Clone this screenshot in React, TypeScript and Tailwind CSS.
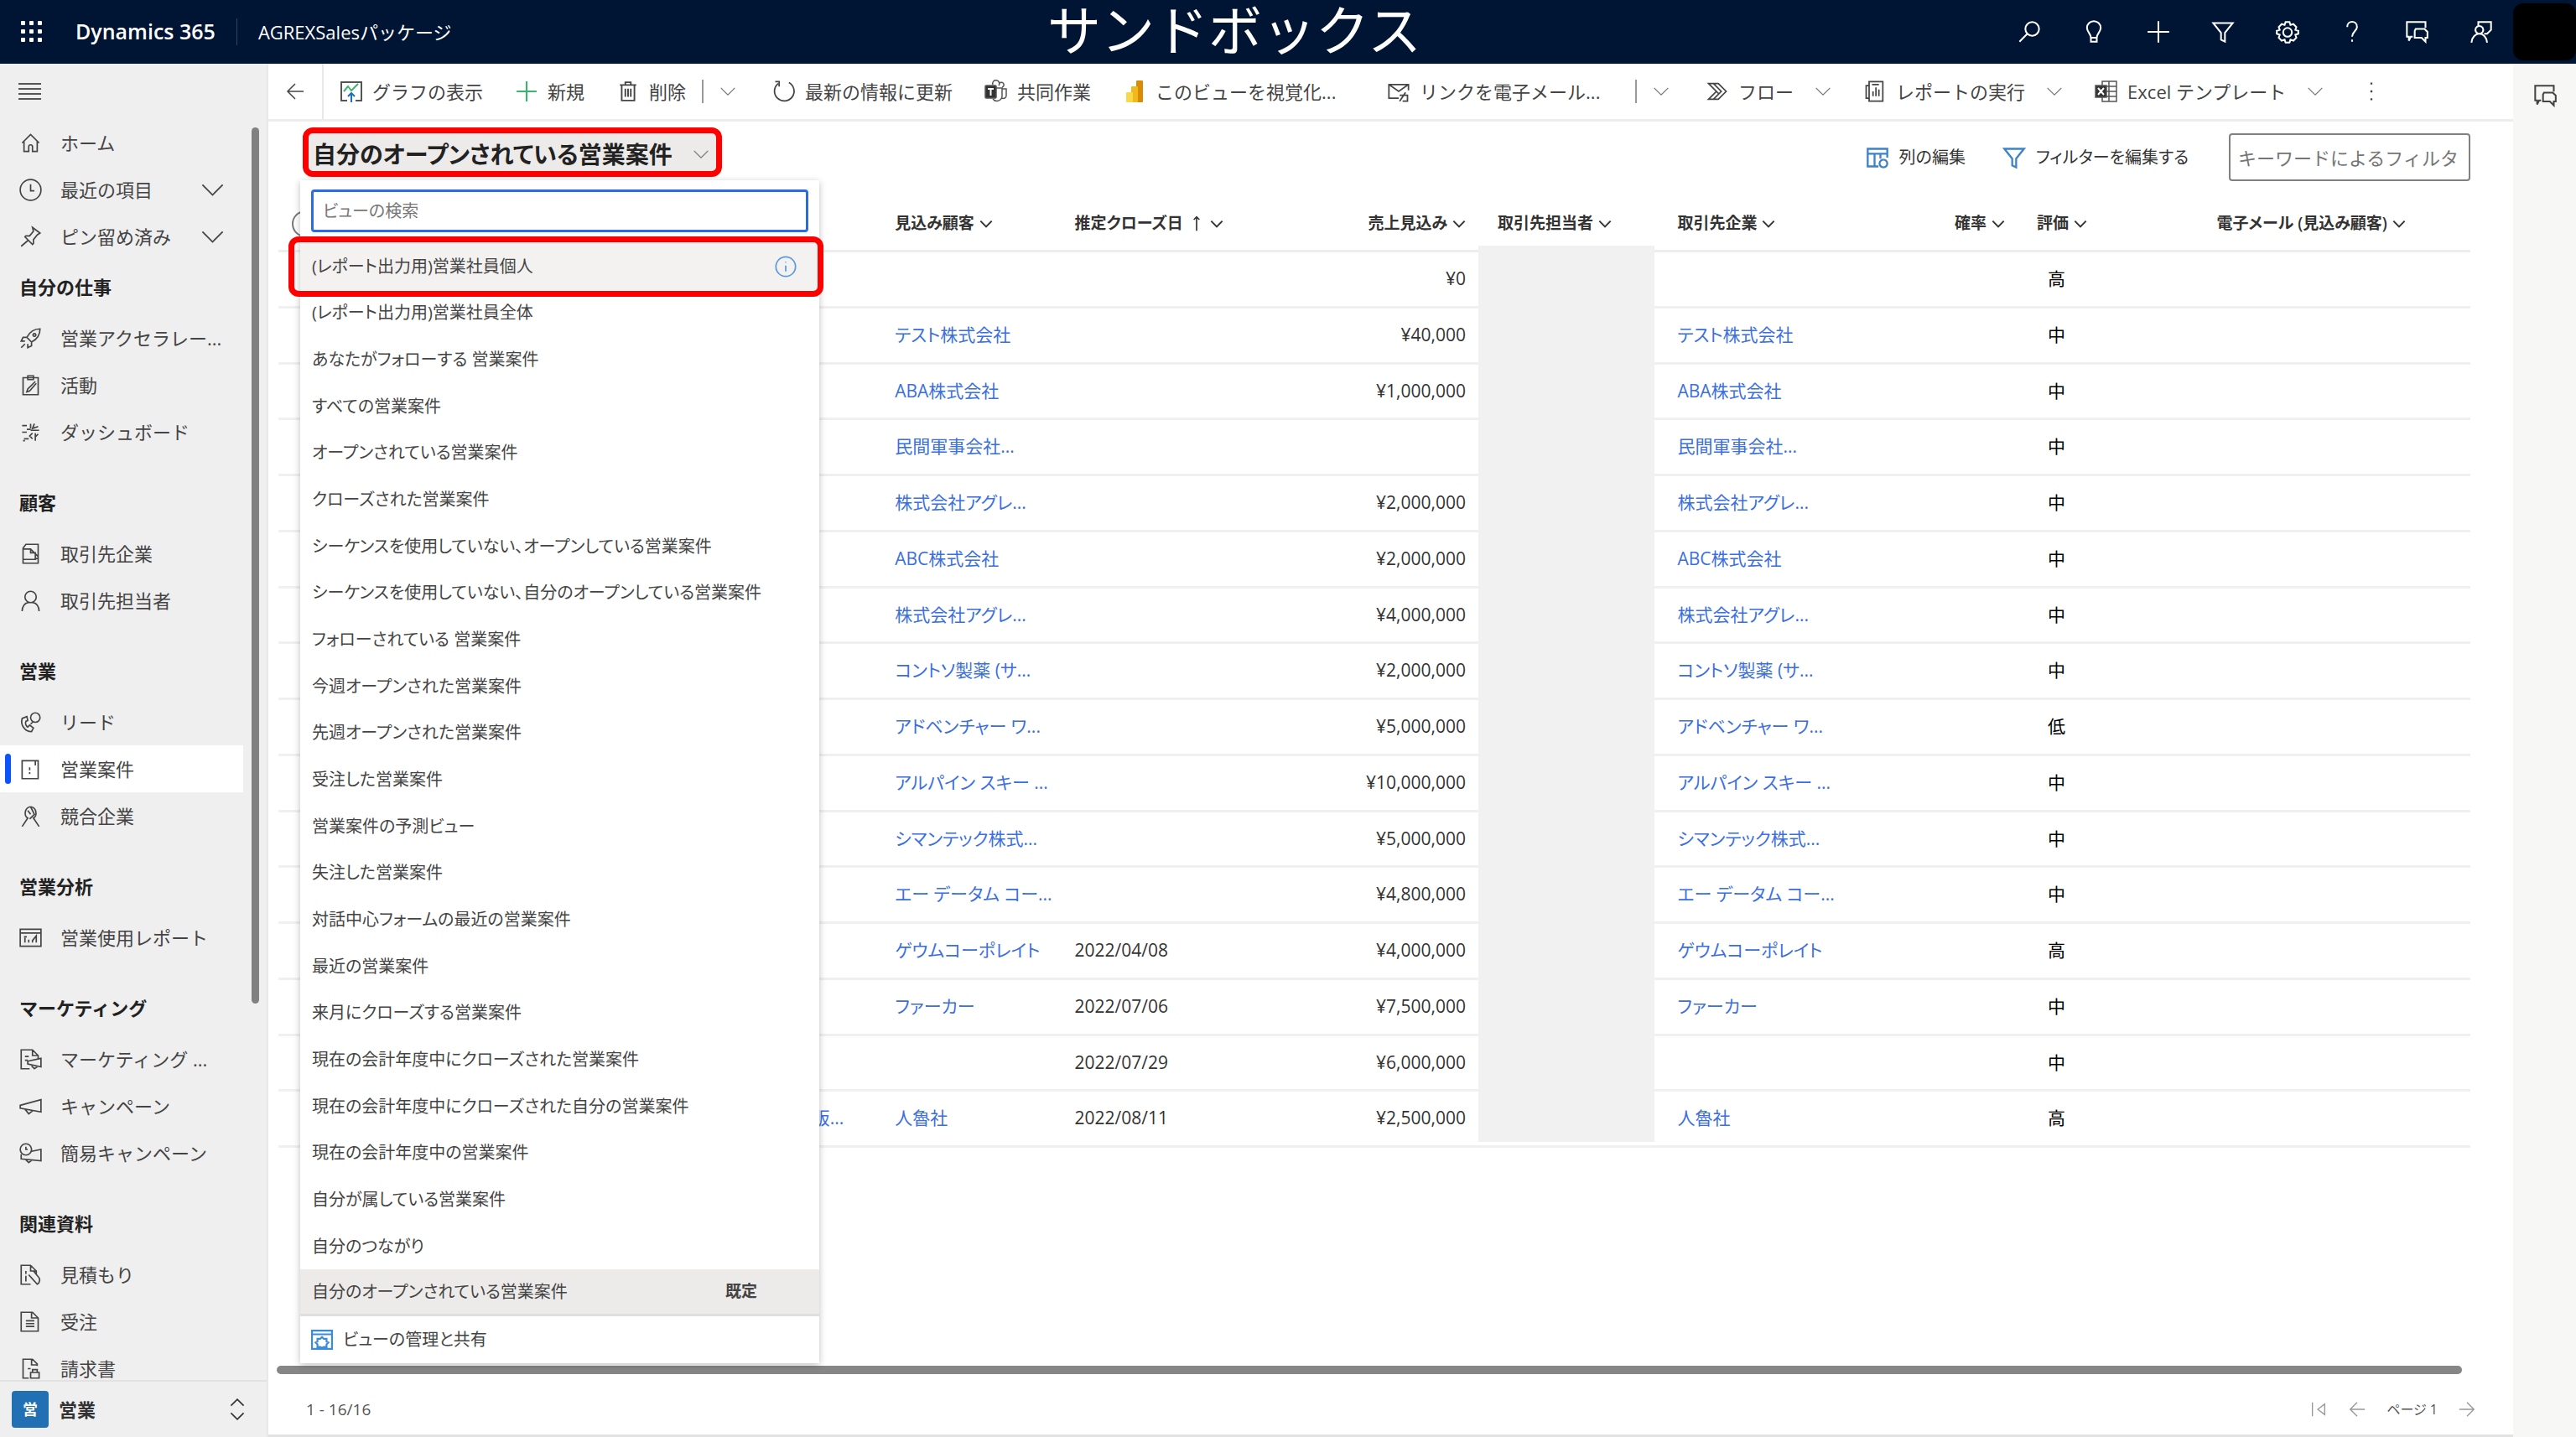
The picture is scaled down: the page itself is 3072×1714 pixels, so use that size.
import { ReactNode } from 'react';

// stroke drawings on a 24 x 24 grid
const icons: Record<string, string> = {
  home: 'M3 12l9-9 9 9M5 10v11h5v-5a2 2 0 0 1 4 0v5h5V10',
  clock: 'M12 1a11 11 0 1 0 0 22 11 11 0 1 0 0-22M12 6v7h4',
  pin: 'M14 2l8 6-3 2-4 5 0 4-1 1-8-8 1-1h4l4-5zM9 16l-7 6',
  rocket: 'M22 2c-6 0-11 3-14 9l5 5c6-3 9-8 9-14zM8 11l-4 0-2 4 4 0M13 16v4l-4 2v-4M16 7a1.5 1.5 0 1 0 .1 0M6 18l-4 4',
  activity: 'M4 4h16v18H4zM9 2h6v4H9zM17 8l-8 8-1 3 3-1 7-8',
  dashboard: 'M3 5h5M3 12h5M5 19h5M12 3v5M12 10h9M16 3l-2 5 6-2M14 13l-3 3 3 3M17 13v8M20 14l-3 3M8 9l4 0M4 21h2',
  account: 'M4 22V6l3-4h13v20zM4 7h8l8 8M12 7v4h5v6h3M4 18h14',
  person: 'M12 2a6 6 0 1 0 0 12 6 6 0 1 0 0-12M3 23c0-5 3-9 7-9M21 23c0-5-3-9-7-9',
  lead: 'M17 2a5 5 0 1 0 0 10 5 5 0 1 0 0-10M3 8c-2 7 3 14 10 14l2-4-4-3-2 2c-2-1-3-4-2-6l2-1-1-4zM14 12l-2 2',
  opportunity: 'M3 3h17v19H3zM17 3v5M11 10v3M11 15v2',
  competitor: 'M12 2c-7 1-7 10-3 12L3 23M12 2c7 1 7 10 3 12l6 9M12 2l4 8-5 5M9 6l3 4',
  report: 'M1 3h22v18H1zM1 7h22M6 17v-5M10 17v-3M14 17v-2l4-5v7M5 11h3',
  marketing: 'M20 11V8l-6-6H2v20h9M14 2v6h6M6 9h4M6 13h3M9 14l14-3v9L9 17zM13 19l3 3 3-2',
  campaign: 'M1 11l22-6v13L1 14zM6 15l4 5 4-3',
  quick: 'M7 2a6 6 0 1 0 0 12 6 6 0 1 0 0-12M2 13v5l21 2V8l-10 2M7 5v3h2M7 19l3 3 4-3',
  quote: 'M12 22H2V2h10l6 6v4M12 2v6h6M7 8v3M7 13v6M10 12l9 10a5 5 0 0 0 1-8l-5-6',
  order: 'M2 2h12l6 6v14H2zM13 2v6h7M7 11h9M7 14h9M7 17h9',
  invoice: 'M19 9V7l-5-5H4v20h6M13 2v6h6M9 12h3M12 16h9v6h-9zM14 16v-3h5v3',
  search: 'M15 2a7 7 0 1 0 0 14 7 7 0 1 0 0-14M10 14L2 22',
  bulb: 'M12 1a7 7 0 0 0-7 7c0 4 4 6 4 10v4h6v-4c0-4 4-6 4-10a7 7 0 0 0-7-7M9 18h6',
  plus: 'M12 1v22M1 12h22',
  filter: 'M2 3h20l-8 10v9l-4-2v-7z',
  gear: 'M10 2h4l1 3 3-1 3 3-1 3 3 1v3l-3 1 1 3-3 3-3-1-1 3h-4l-1-3-3 1-3-3 1-3-3-1v-3l3-1-1-3 3-3 3 1zM12 8a4 4 0 1 0 0 9 4 4 0 1 0 0-9',
  help: 'M7 7c0-7 10-7 10 0 0 4-5 5-5 10M12 20v2',
  chat: 'M8 17H6l-2 4v-4H2V2h19v6M11 9h9l3 3v6h-2v4l-4-4h-7v-7z',
  feedback: 'M9 6V2h13v8l-4 4h-3M10 6a4 4 0 1 0 .1 0M2 23c1-12 15-12 16 0',
  back: 'M22 12H3M12 3l-9 9 9 9',
  forward: 'M2 12h19M12 3l9 9-9 9',
  first: 'M4 3v18M20 5v14l-9-7z',
  down: 'M2 7l10 10L22 7',
  trash: 'M3 5h18M9 5V2h6v3M5 5v17h14V5M9 9v9M12 9v9M15 9v9',
  refresh: 'M6 4a10 10 0 1 0 11-1M3 2h4v5',
  mail: 'M12 19H2V5h20v6M2 5l10 7 10-7M13 16h8v6h-5M13 22l6-9',
  flow: 'M3 4h10l8 8-8 8H3l8-8zM8 4l8 8-8 8M8 9l6 6',
  runreport: 'M6 2h14v20H6zM6 6H3v13h3M10 17v-5M13 17V8M16 17v-7M9 5h7',
  columns: 'M13 21H2V3h20v9M2 8h20M9 8v13M15 8v5M18 14a4 4 0 1 0 .1 0',
  manage: 'M1 2h22v20H1zM1 6h22M12 9l2 2h3v3l2 1-2 2v3h-3l-2 1-2-1H7v-3l-2-2 2-1v-3h3z',
  info: 'M12 2a10 10 0 1 0 0 20 10 10 0 1 0 0-20M12 11v6M12 7v1',
  more: 'M12 3v2M12 11v2M12 19v2',
  updown: 'M5 8l7-7 7 7M5 16l7 7 7-7',
  sortUp: 'M12 22V2M8 6l4-4 4 4',
};

function Icon({ name, className = 'size-7', weight = 1.5 }: { name: string; className?: string; weight?: number }) {
  return (
    <svg viewBox="0 0 24 24" fill="none" stroke="currentColor" strokeWidth={weight} className={`shrink-0 ${className}`} aria-hidden="true">
      <path d={icons[name]} />
    </svg>
  );
}

const navGroups = [
  {
    title: '',
    items: [
      { icon: 'home', label: 'ホーム' },
      { icon: 'clock', label: '最近の項目', expand: true },
      { icon: 'pin', label: 'ピン留め済み', expand: true },
    ],
  },
  {
    title: '自分の仕事',
    items: [
      { icon: 'rocket', label: '営業アクセラレー...' },
      { icon: 'activity', label: '活動' },
      { icon: 'dashboard', label: 'ダッシュボード' },
    ],
  },
  {
    title: '顧客',
    items: [
      { icon: 'account', label: '取引先企業' },
      { icon: 'person', label: '取引先担当者' },
    ],
  },
  {
    title: '営業',
    items: [
      { icon: 'lead', label: 'リード' },
      { icon: 'opportunity', label: '営業案件', active: true },
      { icon: 'competitor', label: '競合企業' },
    ],
  },
  { title: '営業分析', items: [{ icon: 'report', label: '営業使用レポート' }] },
  {
    title: 'マーケティング',
    items: [
      { icon: 'marketing', label: 'マーケティング ...' },
      { icon: 'campaign', label: 'キャンペーン' },
      { icon: 'quick', label: '簡易キャンペーン' },
    ],
  },
  {
    title: '関連資料',
    items: [
      { icon: 'quote', label: '見積もり' },
      { icon: 'order', label: '受注' },
      { icon: 'invoice', label: '請求書' },
    ],
  },
] as { title: string; items: { icon: string; label: string; expand?: boolean; active?: boolean }[] }[];

const views = [
  '(レポート出力用)営業社員個人',
  '(レポート出力用)営業社員全体',
  'あなたがフォローする 営業案件',
  'すべての営業案件',
  'オープンされている営業案件',
  'クローズされた営業案件',
  'シーケンスを使用していない、オープンしている営業案件',
  'シーケンスを使用していない、自分のオープンしている営業案件',
  'フォローされている 営業案件',
  '今週オープンされた営業案件',
  '先週オープンされた営業案件',
  '受注した営業案件',
  '営業案件の予測ビュー',
  '失注した営業案件',
  '対話中心フォームの最近の営業案件',
  '最近の営業案件',
  '来月にクローズする営業案件',
  '現在の会計年度中にクローズされた営業案件',
  '現在の会計年度中にクローズされた自分の営業案件',
  '現在の会計年度中の営業案件',
  '自分が属している営業案件',
  '自分のつながり',
  '自分のオープンされている営業案件',
];

// company, close date, revenue, rating
const rows = [
  ['', '', '¥0', '高'],
  ['テスト株式会社', '', '¥40,000', '中'],
  ['ABA株式会社', '', '¥1,000,000', '中'],
  ['民間軍事会社...', '', '', '中'],
  ['株式会社アグレ...', '', '¥2,000,000', '中'],
  ['ABC株式会社', '', '¥2,000,000', '中'],
  ['株式会社アグレ...', '', '¥4,000,000', '中'],
  ['コントソ製薬 (サ...', '', '¥2,000,000', '中'],
  ['アドベンチャー ワ...', '', '¥5,000,000', '低'],
  ['アルパイン スキー ...', '', '¥10,000,000', '中'],
  ['シマンテック株式...', '', '¥5,000,000', '中'],
  ['エー データム コー...', '', '¥4,800,000', '中'],
  ['ゲウムコーポレイト', '2022/04/08', '¥4,000,000', '高'],
  ['ファーカー', '2022/07/06', '¥7,500,000', '中'],
  ['', '2022/07/29', '¥6,000,000', '中'],
  ['人魯社', '2022/08/11', '¥2,500,000', '高'],
];

const headerIcons = [
  ['search', '検索'],
  ['bulb', 'ヒント'],
  ['plus', '新規作成'],
  ['filter', 'フィルター'],
  ['gear', '設定'],
  ['help', 'ヘルプ'],
  ['chat', 'チャット'],
  ['feedback', 'フィードバック'],
];

function TopBar() {
  return (
    <header className="flex h-[76px] shrink-0 items-center bg-[#001433] text-white">
      <div className="flex flex-1 items-center">
        <button aria-label="アプリ起動ツール" className="ml-6 size-7">
          <svg viewBox="0 0 28 28" fill="currentColor">
            {[1, 11, 21].map((y) => [1, 11, 21].map((x) => <rect key={`${x}-${y}`} x={x} y={y} width="5" height="5" rx="1" />))}
          </svg>
        </button>
        <a href="#" className="ml-[38px] text-[25px] font-semibold">Dynamics 365</a>
        <span className="mx-[25px] h-8 w-px bg-[#33435c]" />
        <a href="#" className="text-[22px]">AGREXSalesパッケージ</a>
      </div>
      <p className="pb-1 text-[64px] leading-[72px]">サンドボックス</p>
      <div className="flex flex-1 items-center justify-end pl-32">
        {headerIcons.map(([name, label]) => (
          <button key={name} aria-label={label} className="flex w-[77px] justify-center">
            <Icon name={name} weight={1.75} />
          </button>
        ))}
        <span className="h-[68px] w-[75px] rounded-xl bg-black" />
      </div>
    </header>
  );
}

function Sidebar() {
  return (
    <aside className="relative flex w-80 shrink-0 flex-col border-r-2 border-[#e8e8e8] bg-[#efefef] text-[22px] text-[#444]">
      <div className="flex h-[66px] shrink-0 items-center pl-[22px]">
        <button aria-label="サイト マップ" className="flex w-[27px] flex-col gap-1">
          <span className="h-[2px] bg-[#555]" />
          <span className="h-[2px] bg-[#555]" />
          <span className="h-[2px] bg-[#555]" />
          <span className="h-[2px] bg-[#555]" />
        </button>
      </div>
      <nav className="flex min-h-0 flex-1 flex-col gap-6 overflow-hidden">
        {navGroups.map((g, i) => (
          <div key={i} className={i === 1 ? '-mt-6' : ''}>
            {g.title && <h2 className="flex h-[65px] items-center pl-[23px] font-semibold text-[#222]">{g.title}</h2>}
            {g.items.map((it) => (
              <a
                key={it.label}
                href="#"
                className={`relative mr-7 flex h-14 items-center gap-[22px] pl-[23px] ${it.active ? 'bg-white' : ''}`}
              >
                {it.active && <span className="absolute left-[6px] h-9 w-[7px] rounded-sm bg-[#0b53ff]" />}
                <Icon name={it.icon} className="size-[27px]" />
                <span className="whitespace-nowrap">{it.label}</span>
                {it.expand && <Icon name="down" className="ml-auto mr-[22px] size-[29px]" />}
              </a>
            ))}
          </div>
        ))}
      </nav>
      <span className="absolute right-[9px] top-[76px] h-[1045px] w-[9px] rounded-full bg-[#808080]" />
      <button className="flex h-[68px] shrink-0 items-center gap-3 border-t-2 border-[#e2e2e2] pl-[14px] pr-[22px] font-semibold text-[#333]">
        <span className="flex size-11 items-center justify-center rounded-sm bg-[#2170b4] text-lg text-white">営</span>
        営業
        <Icon name="updown" className="ml-auto size-[26px]" />
      </button>
    </aside>
  );
}

function Command({ icon, label, wide, menu }: { icon: ReactNode; label: string; wide?: boolean; menu?: boolean }) {
  return (
    <button className="flex h-full items-center gap-[11px] px-[19px]">
      <span className="flex w-7 justify-center">{icon}</span>
      <span className={`whitespace-nowrap text-left ${wide ? 'w-[238px]' : ''}`}>{label}</span>
      {menu && <Icon name="down" className="ml-[14px] size-5 text-[#777]" />}
    </button>
  );
}

function Split() {
  return (
    <button aria-label="その他のオプション" className="flex items-center gap-[19px] pr-6">
      <span className="h-7 w-[2px] bg-[#999]" />
      <Icon name="down" className="size-5 text-[#777]" />
    </button>
  );
}

const chartIcon = (
  <svg viewBox="0 0 28 28" fill="none" strokeWidth="2" className="size-7">
    <path d="M9 25H2V3h24v22h-7" stroke="#555" />
    <path d="M5 14l5-6 4 5 8-8" stroke="#3cb371" />
    <path d="M14 27V16M10 20l4-4 4 4" stroke="#1f6fc0" />
  </svg>
);

const teamsIcon = (
  <svg viewBox="0 0 28 28" fill="none" stroke="#555" strokeWidth="1.5" className="size-7">
    <rect x="1" y="7" width="13" height="15" rx="1" fill="#333" />
    <path d="M4 11h7M7.5 11v8" stroke="#fff" strokeWidth="2" />
    <path d="M10 6a4 4 0 1 1 7 1M18 4a3 3 0 1 1 3 5M14 10h7v10c-1 6-8 7-11 3M21 11h5v8c0 3-3 4-5 3" />
  </svg>
);

const powerBiIcon = (
  <svg viewBox="0 0 28 28" className="size-7">
    <rect x="16" y="1" width="8" height="26" rx="1" fill="#d98b06" />
    <rect x="10" y="8" width="8" height="19" rx="1" fill="#f0b91c" />
    <rect x="4" y="15" width="8" height="12" rx="1" fill="#f9d84a" />
  </svg>
);

const excelIcon = (
  <svg viewBox="0 0 28 28" fill="none" stroke="#555" strokeWidth="1.5" className="size-7">
    <path d="M9 7V2h17v24H9v-5M17 2v24M9 8h17M14 14h12M9 20h17" />
    <rect x="1" y="7" width="13" height="14" fill="#333" />
    <path d="M4 10l7 8M11 10l-7 8" stroke="#fff" strokeWidth="2" />
  </svg>
);

function CommandBar() {
  return (
    <div className="flex h-[69px] shrink-0 items-center border-b-[3px] border-[#ededed] text-[22px] text-[#444]">
      <button aria-label="戻る" className="flex h-full w-[66px] items-center justify-center border-r-2 border-[#e8e8e8]">
        <Icon name="back" className="size-6" />
      </button>
      <Command icon={chartIcon} label="グラフの表示" />
      <Command icon={<Icon name="plus" className="size-[26px] text-[#3cb371]" weight={2} />} label="新規" />
      <Command icon={<Icon name="trash" className="size-[26px]" weight={1.75} />} label="削除" />
      <Split />
      <Command icon={<Icon name="refresh" />} label="最新の情報に更新" />
      <Command icon={teamsIcon} label="共同作業" />
      <Command icon={powerBiIcon} label="このビューを視覚化..." wide />
      <Command icon={<Icon name="mail" />} label="リンクを電子メール..." wide />
      <Split />
      <Command icon={<Icon name="flow" />} label="フロー" menu />
      <Command icon={<Icon name="runreport" />} label="レポートの実行" menu />
      <Command icon={excelIcon} label="Excel テンプレート" menu />
      <button aria-label="その他のコマンド" className="px-6">
        <Icon name="more" className="size-7" weight={2} />
      </button>
    </div>
  );
}

function ViewMenu() {
  return (
    <div className="absolute left-[-3px] top-[63px] z-10 w-[619px] bg-white text-[#444] shadow-[0_2px_8px_rgba(0,0,0,0.25)]">
      <div className="p-[13px] pt-[11px]">
        <input
          autoFocus
          aria-label="ビューの検索"
          placeholder="ビューの検索"
          className="block h-[51px] w-full rounded-sm border-[3px] border-[#2b6be4] px-[11px] text-xl placeholder:text-[#777] outline-none"
        />
      </div>
      <ul className="flex h-[1280px] flex-col text-xl">
        {views.map((v, i) => (
          <li key={v} className="relative flex-1">
            <button
              className={`flex h-full w-full items-center whitespace-nowrap px-[14px] text-left ${
                i === 0 ? 'bg-[#f3f2f1]' : i === views.length - 1 ? 'border-b-[3px] border-[#e1dfdd] bg-[#edebe9]' : ''
              }`}
            >
              {v}
              {i === 0 && <Icon name="info" className="ml-auto mr-3 size-[28px] text-[#5b9bdc]" />}
              {i === views.length - 1 && <span className="ml-auto mr-[60px] text-[19px] font-semibold">既定</span>}
            </button>
            {i === 0 && (
              <span className="pointer-events-none absolute -bottom-2 -left-[14px] -right-[5px] -top-2 rounded-xl border-[7px] border-[#fe0000]" />
            )}
          </li>
        ))}
      </ul>
      <button className="flex h-14 items-center gap-3 px-[13px] text-xl">
        <Icon name="manage" className="size-[26px] text-[#3a8bd8]" weight={2} />
        ビューの管理と共有
      </button>
    </div>
  );
}

function ViewHeader() {
  return (
    <div className="flex h-[90px] shrink-0 items-start pl-[41px] pr-[51px] pt-[7px]">
      <div className="relative">
        <button className="flex h-[59px] w-[500px] items-center justify-between whitespace-nowrap rounded-xl border-[7px] border-[#fe0000] bg-[#edebe9] pl-[5px] pr-2 pt-1 text-[28px] font-semibold text-[#222]">
          自分のオープンされている営業案件
          <Icon name="down" className="size-5 text-[#777]" />
        </button>
        <ViewMenu />
      </div>
      <div className="ml-auto flex items-center pt-[7px] text-xl text-[#333]">
        <button className="flex items-center gap-3">
          <Icon name="columns" className="size-7 text-[#3f83c4]" weight={2} />
          列の編集
        </button>
        <button className="ml-11 flex items-center gap-3">
          <Icon name="filter" className="size-7 text-[#3f83c4]" weight={2} />
          フィルターを編集する
        </button>
        <input
          aria-label="キーワードによるフィルタ"
          placeholder="キーワードによるフィルタ"
          className="ml-12 h-[57px] w-[288px] rounded-sm border-2 border-[#808080] pl-[9px] text-[22px] [font-feature-settings:normal] placeholder:text-[#757575]"
        />
      </div>
    </div>
  );
}

function Head({ label, right, sorted }: { label: string; right?: boolean; sorted?: boolean }) {
  return (
    <th scope="col" className="border-b-[3px] border-[#ededed] px-[19px] font-semibold">
      <span className={`flex items-center gap-[6px] whitespace-nowrap ${right ? 'justify-end' : ''}`}>
        {label}
        {sorted && <Icon name="sortUp" className="size-5" weight={2} />}
        <Icon name="down" className="size-4" weight={3} />
      </span>
    </th>
  );
}

const line = 'border-b-[3px] border-[#f0f0f0] px-[19px]';

function Grid() {
  return (
    <div className="relative pl-3 pr-[51px]">
      <table className="h-[1134px] w-full table-fixed border-separate border-spacing-0 text-left text-[21px] text-[#333]">
        <colgroup>
          <col className="w-[2.6%]" />
          <col className="w-[24.8%]" />
          <col className="w-[8.2%]" />
          <col className="w-[10.2%]" />
          <col className="w-[9.1%]" />
          <col className="w-[8.2%]" />
          <col className="w-[8.2%]" />
          <col className="w-[8.2%]" />
          <col className="w-[8.2%]" />
          <col />
        </colgroup>
        <thead className="text-[19px]">
          <tr className="h-[66px]">
            <th className="border-b-[3px] border-[#ededed] pl-4">
              <input type="checkbox" aria-label="すべて選択" className="block size-8 appearance-none rounded-full border-2 border-[#777]" />
            </th>
            <th className="border-b-[3px] border-[#ededed]" />
            <Head label="見込み顧客" />
            <Head label="推定クローズ日" sorted />
            <Head label="売上見込み" right />
            <Head label="取引先担当者" />
            <Head label="取引先企業" />
            <Head label="確率" right />
            <Head label="評価" />
            <Head label="電子メール (見込み顧客)" />
          </tr>
        </thead>
        <tbody>
          {rows.map(([company, date, amount, rating], i) => (
            <tr key={i} className="h-[66px]">
              <td className="border-b-[3px] border-[#f0f0f0]" />
              <td className="border-b-[3px] border-[#f0f0f0] pr-[42px] text-right">
                {i === rows.length - 1 && <a href="#" className="text-[#3b6fe0]">販...</a>}
              </td>
              <td className={line}>
                <a href="#" className="whitespace-nowrap text-[#3b6fe0]">{company}</a>
              </td>
              <td className={line}>{date}</td>
              <td className={`${line} text-right`}>{amount}</td>
              <td className={line} />
              <td className={line}>
                <a href="#" className="whitespace-nowrap text-[#3b6fe0]">{company}</a>
              </td>
              <td className={line} />
              <td className="border-b-[3px] border-[#f0f0f0] pl-8 text-black">{rating}</td>
              <td className={line} />
            </tr>
          ))}
        </tbody>
      </table>
      {/* masked contact column */}
      <div className="absolute bottom-[7px] left-[53.9%] top-[58px] w-[210px] bg-[#f1f1f1]" />
    </div>
  );
}

function Pager() {
  return (
    <div className="mt-auto">
      <div className="ml-[10px] mr-[61px] h-[10px] rounded-full bg-[#868686]" />
      <div className="flex h-[75px] items-center border-b-[3px] border-[#e2e2e2] pl-[45px] pr-11 pt-3 text-[19px] text-[#555]">
        <span>1 - 16/16</span>
        <div className="ml-auto flex items-center gap-6 text-[#999]">
          <button aria-label="最初のページ"><Icon name="first" className="size-[22px]" /></button>
          <button aria-label="前のページ"><Icon name="back" className="size-[22px]" /></button>
          <span className="text-base text-[#555]">ページ 1</span>
          <button aria-label="次のページ"><Icon name="forward" className="size-[22px]" /></button>
        </div>
      </div>
    </div>
  );
}

export default function App() {
  return (
    <div className="flex h-screen flex-col overflow-hidden bg-white font-['Open_Sans','Noto_Sans_CJK_JP',sans-serif]">
      <TopBar />
      <div className="flex min-h-0 flex-1">
        <Sidebar />
        <main className="flex min-w-0 flex-1 flex-col">
          <CommandBar />
          <div className="flex min-h-0 flex-1 flex-col [font-feature-settings:'palt']">
            <ViewHeader />
            <Grid />
            <Pager />
          </div>
        </main>
        <aside className="flex w-[75px] shrink-0 justify-center bg-[#f7f7f6] pt-6">
          <button aria-label="チャット" className="h-7 text-[#444]">
            <Icon name="chat" weight={1.75} />
          </button>
        </aside>
      </div>
    </div>
  );
}
